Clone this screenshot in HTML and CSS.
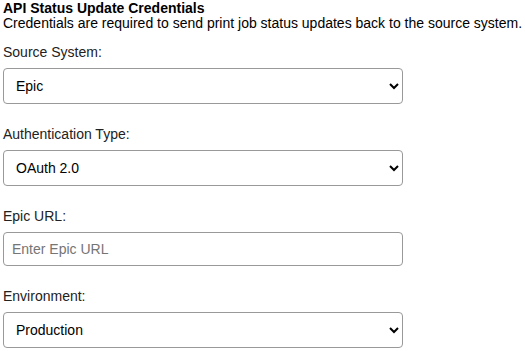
FILE: index.html
```html
<!DOCTYPE html>
<html lang="en">
<head>
    <meta charset="UTF-8">
    <meta name="viewport" content="width=device-width, initial-scale=1.0">
    <title>API Status Update Credentials</title>
    <link rel="stylesheet" href="styles.css">
</head>
<body>
<div class="container">
    <h4>API Status Update Credentials</h4>
    <p class="note">Credentials are required to send print job status updates back to the source system.</p>

    <form id="credentialsForm">
        <div class="form-group">
            <label for="sourceSystem">Source System:</label>
            <select id="sourceSystem">
                <option value="epic">Epic</option>
                <option value="cerner">Cerner</option>
                <option value="meditech">Meditech</option>
            </select>
        </div>

        <div class="form-group">
            <label for="authType">Authentication Type:</label>
            <select id="authType">
                <option value="oauth2">OAuth 2.0</option>
                <option value="basic">Basic Auth</option>
                <option value="apikey">API Key</option>
            </select>
        </div>

        <div class="form-group">
            <label for="epicUrl">Epic URL:</label>
            <input type="text" id="epicUrl" placeholder="Enter Epic URL">
        </div>

        <div class="form-group">
            <label for="environment">Environment:</label>
            <select id="environment">
                <option value="production">Production</option>
                <option value="test">Test</option>
            </select>
        </div>
    </form>
</div>
</body>
</html>
```

FILE: styles.css
```css
* {
    box-sizing: border-box;
    margin: 0;
    padding: 0;
    font-family: 'Liberation Sans', Arial, sans-serif;
}

body {
    background-color: #fff;
    color: #000;
    font-size: 14px;
}

.container {
    padding-left: 3px;
}

h4 {
    font-size: 14px;
    font-weight: bold;
    line-height: 14px;
    padding-top: 1px;
}

.note {
    margin-bottom: 13px;
    white-space: nowrap;
}

.form-group {
    margin-bottom: 22px;
}

label {
    display: block;
    margin-bottom: 8px;
    color: #222;
}

input, select {
    display: block;
    width: 400px;
    padding: 8px;
    border: 1px solid #999;
    border-radius: 4px;
    background-color: #fff;
    font-size: 14px;
    color: #000;
}

input::placeholder {
    color: #757575;
}
```
